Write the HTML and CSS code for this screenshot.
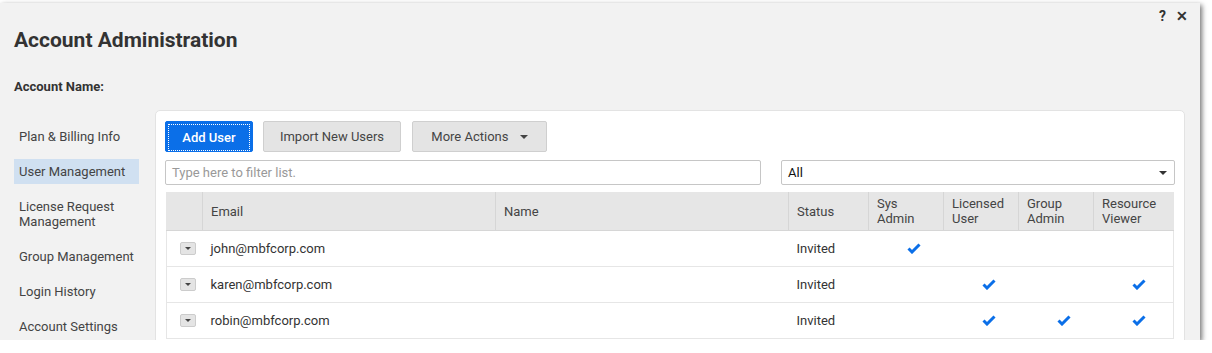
FILE: index.html
```html
<!DOCTYPE html>
<html lang="en">
<head>
    <meta charset="UTF-8">
    <title>Account Administration</title>
    <link rel="stylesheet" href="styles.css">
</head>
<body>
    <div class="dialog">
        <div class="dialog-tools">
            <span class="tool">?</span>
            <span class="tool">&#x2715;</span>
        </div>
        <h1>Account Administration</h1>
        <div class="account-name">Account Name:</div>

        <div class="dialog-body">
            <ul class="menu">
                <li>Plan &amp; Billing Info</li>
                <li class="active">User Management</li>
                <li>License Request<br>Management</li>
                <li>Group Management</li>
                <li>Login History</li>
                <li>Account Settings</li>
            </ul>

            <div class="panel">
                <div class="actions">
                    <button class="btn btn-primary"><span>Add User</span></button>
                    <button class="btn btn-import">Import New Users</button>
                    <button class="btn btn-more">More Actions <span class="caret"></span></button>
                </div>

                <div class="filters">
                    <div class="filter-input">Type here to filter list.</div>
                    <div class="filter-select">All <span class="caret"></span></div>
                </div>

                <table class="users">
                    <colgroup>
                        <col style="width:36px">
                        <col style="width:293px">
                        <col style="width:293px">
                        <col style="width:80px">
                        <col style="width:75px">
                        <col style="width:75px">
                        <col style="width:75px">
                        <col style="width:80px">
                    </colgroup>
                    <thead>
                        <tr>
                            <th></th>
                            <th>Email</th>
                            <th>Name</th>
                            <th>Status</th>
                            <th>Sys<br>Admin</th>
                            <th>Licensed<br>User</th>
                            <th>Group<br>Admin</th>
                            <th>Resource<br>Viewer</th>
                        </tr>
                    </thead>
                    <tbody>
                        <tr>
                            <td><span class="toggle"><span class="caret"></span></span></td>
                            <td>john@mbfcorp.com</td>
                            <td></td>
                            <td>Invited</td>
                            <td class="check"><svg width="14" height="11" viewBox="0 0 14 11"><polyline points="1.5,5.5 5,9 12.5,1.5" /></svg></td>
                            <td class="check"></td>
                            <td class="check"></td>
                            <td class="check"></td>
                        </tr>
                        <tr>
                            <td><span class="toggle"><span class="caret"></span></span></td>
                            <td>karen@mbfcorp.com</td>
                            <td></td>
                            <td>Invited</td>
                            <td class="check"></td>
                            <td class="check"><svg width="14" height="11" viewBox="0 0 14 11"><polyline points="1.5,5.5 5,9 12.5,1.5" /></svg></td>
                            <td class="check"></td>
                            <td class="check"><svg width="14" height="11" viewBox="0 0 14 11"><polyline points="1.5,5.5 5,9 12.5,1.5" /></svg></td>
                        </tr>
                        <tr>
                            <td><span class="toggle"><span class="caret"></span></span></td>
                            <td>robin@mbfcorp.com</td>
                            <td></td>
                            <td>Invited</td>
                            <td class="check"></td>
                            <td class="check"><svg width="14" height="11" viewBox="0 0 14 11"><polyline points="1.5,5.5 5,9 12.5,1.5" /></svg></td>
                            <td class="check"><svg width="14" height="11" viewBox="0 0 14 11"><polyline points="1.5,5.5 5,9 12.5,1.5" /></svg></td>
                            <td class="check"><svg width="14" height="11" viewBox="0 0 14 11"><polyline points="1.5,5.5 5,9 12.5,1.5" /></svg></td>
                        </tr>
                    </tbody>
                </table>
            </div>
        </div>
    </div>
</body>
</html>
```

FILE: styles.css
```css
body {
    margin: 0;
    background-color: #fff;
    font-family: 'Roboto', 'Liberation Sans', sans-serif;
    color: #333;
}
.dialog {
    width: 1200px;
    height: 337px;
    margin-top: 3px;
    background-color: #f2f2f2;
    box-shadow: 2px 2px 5px rgba(0,0,0,0.55);
    overflow: hidden;
    display: flex;
    flex-direction: column;
}
.dialog-tools {
    display: flex;
    justify-content: flex-end;
    gap: 10px;
    padding: 5px 12px 0 0;
    height: 16px;
}
.tool {
    font-size: 14px;
    font-weight: 700;
    line-height: 16px;
    color: #333;
}
h1 {
    margin: 4px 0 0 14px;
    font-size: 21px;
    line-height: 24px;
    font-weight: 700;
    color: #333;
}
.account-name {
    margin: 27px 0 0 14px;
    font-size: 13px;
    line-height: 16px;
    font-weight: 700;
}
.dialog-body {
    display: flex;
    margin-top: 15px;
    flex: 1;
}
.menu {
    list-style: none;
    margin: 0 0 0 14px;
    padding: 14px 0 0 0;
    width: 125px;
    flex-shrink: 0;
}
.menu li {
    padding: 5px;
    font-size: 13px;
    line-height: 15px;
    color: #444;
    margin-bottom: 10px;
}
.menu li.active {
    background-color: #d0e0f1;
}
.panel {
    margin-left: 16px;
    width: 1010px;
    background-color: #fff;
    border: 1px solid #e3e3e3;
    border-radius: 5px;
    padding: 10px 9px 0 9px;
}
.actions {
    display: flex;
    gap: 10px;
}
.btn {
    font-family: 'Roboto', 'Liberation Sans', sans-serif;
    font-size: 13px;
    height: 31px;
    padding: 0;
    background-color: #e4e4e4;
    border: 1px solid #cfcfcf;
    border-radius: 2px;
    color: #444;
    white-space: nowrap;
}
.btn-primary {
    width: 88px;
    padding: 2px;
    background-color: #0b6fe8;
    border-color: #0b6fe8;
    color: #fff;
    font-weight: 500;
}
.btn-primary span {
    display: block;
    height: 100%;
    line-height: 25px;
    border: 1px dotted #fff;
}
.btn-import {
    width: 138px;
}
.btn-more {
    width: 135px;
    margin-left: 1px;
}
.btn-more .caret {
    margin-left: 8px;
    vertical-align: 2px;
}
.caret {
    display: inline-block;
    width: 0;
    height: 0;
    border-left: 4px solid transparent;
    border-right: 4px solid transparent;
    border-top: 4px solid #444;
}
.filters {
    display: flex;
    justify-content: space-between;
    margin-top: 8px;
}
.filter-input,
.filter-select {
    height: 23px;
    line-height: 23px;
    border: 1px solid #c6c6c6;
    border-radius: 2px;
    font-size: 13px;
    padding-left: 6px;
}
.filter-input {
    width: 588px;
    color: #999;
}
.filter-select {
    width: 379px;
    color: #111;
    display: flex;
    justify-content: space-between;
    align-items: center;
    padding-right: 7px;
}
.filter-select .caret {
    border-top-color: #333;
}
.users {
    margin: 7px 0 0 1px;
    width: 1007px;
    table-layout: fixed;
    border-collapse: collapse;
    font-size: 13px;
    border-left: 1px solid #e6e6e6;
    border-right: 1px solid #e6e6e6;
}
.users th {
    background-color: #e6e6e6;
    height: 38px;
    padding: 0 8px;
    text-align: left;
    font-weight: 400;
    line-height: 15px;
    color: #444;
    border-left: 1px solid #d6d6d6;
    border-bottom: 1px solid #d6d6d6;
}
.users th:first-child {
    border-left: none;
}
.users td {
    height: 35px;
    padding: 0 8px;
    border-bottom: 1px solid #e6e6e6;
    color: #333;
}
.users td.check {
    padding-left: 38px;
}
.users td.check svg {
    display: block;
}
.users polyline {
    fill: none;
    stroke: #0b6fe8;
    stroke-width: 3;
}
.toggle {
    display: flex;
    justify-content: center;
    align-items: center;
    width: 14px;
    height: 11px;
    margin-left: 5px;
    background-color: #e4e4e4;
    border: 1px solid #cccccc;
    border-radius: 2px;
}
.toggle .caret {
    border-left-width: 3px;
    border-right-width: 3px;
    border-top-width: 3px;
}
```
